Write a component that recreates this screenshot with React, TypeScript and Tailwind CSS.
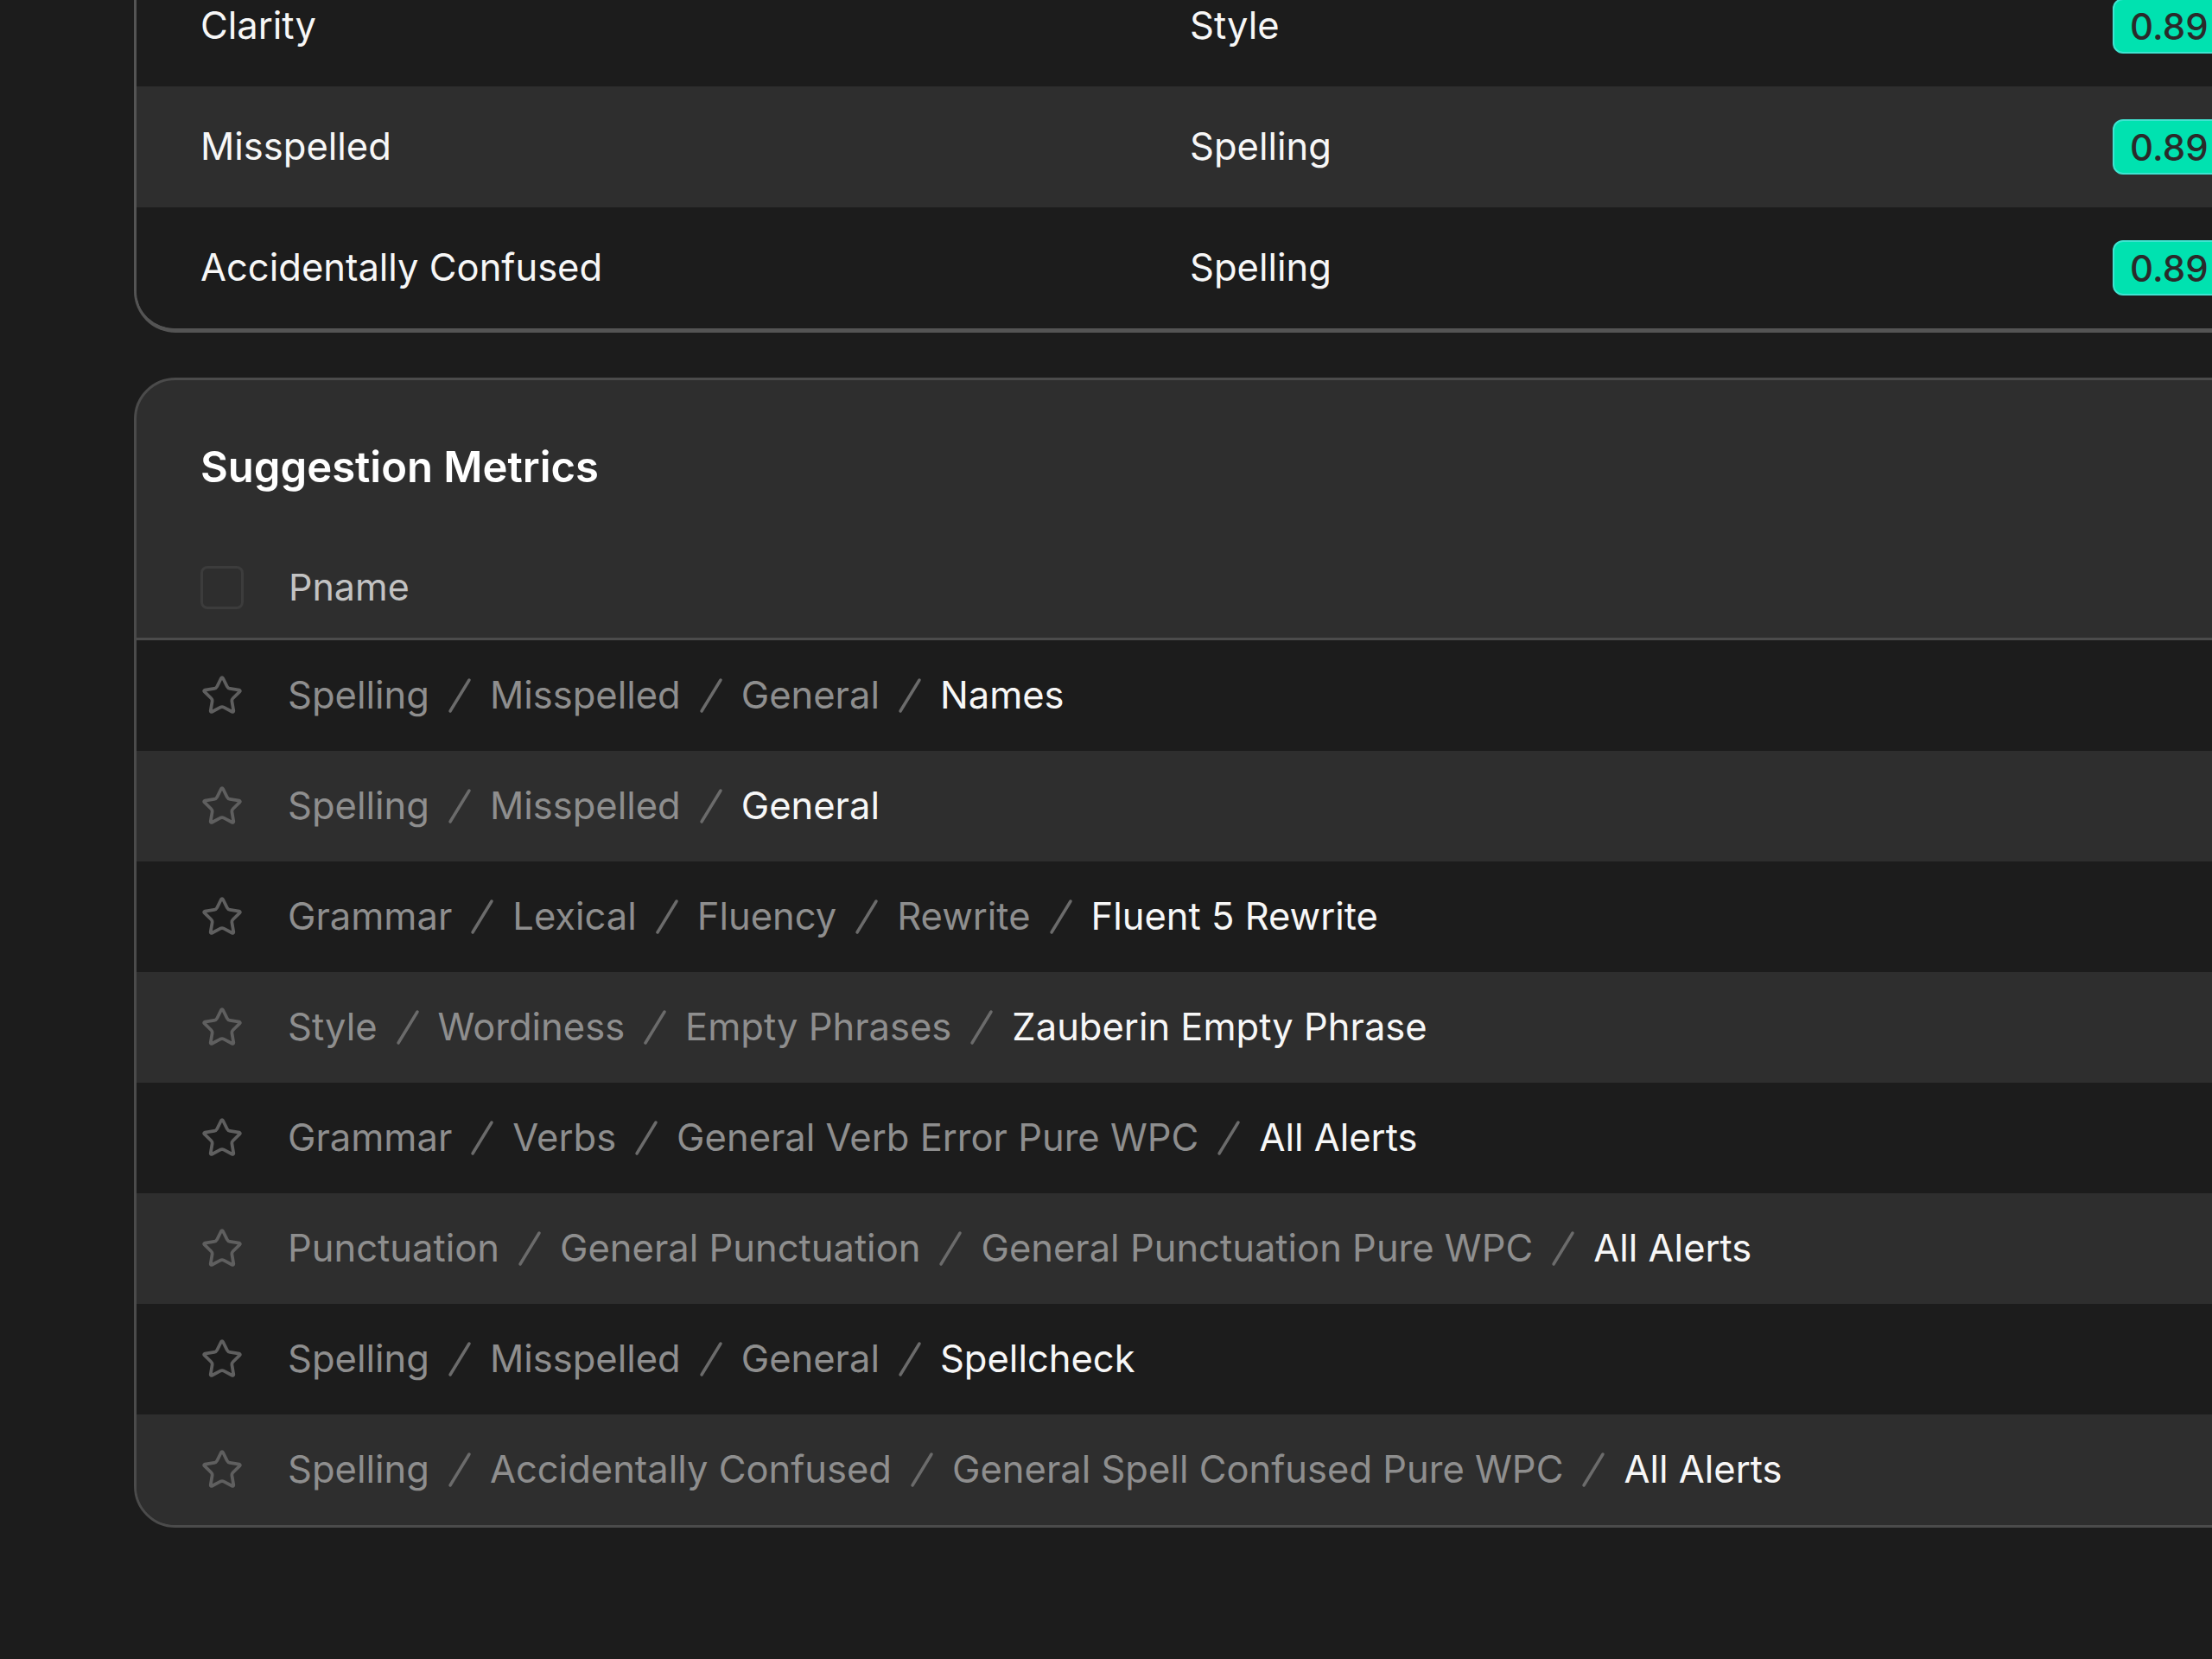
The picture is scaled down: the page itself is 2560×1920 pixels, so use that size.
import React from 'react';
import { Star } from 'lucide-react';

const topRows = [
  { name: 'Clarity', type: 'Style', score: '0.89', bg: 'bg-[#1c1c1c]' },
  { name: 'Misspelled', type: 'Spelling', score: '0.89', bg: 'bg-[#2e2e2e]' },
  { name: 'Accidentally Confused', type: 'Spelling', score: '0.89', bg: 'bg-[#1c1c1c]' },
];

const metrics: string[][] = [
  ['Spelling', 'Misspelled', 'General', 'Names'],
  ['Spelling', 'Misspelled', 'General'],
  ['Grammar', 'Lexical', 'Fluency', 'Rewrite', 'Fluent 5 Rewrite'],
  ['Style', 'Wordiness', 'Empty Phrases', 'Zauberin Empty Phrase'],
  ['Grammar', 'Verbs', 'General Verb Error Pure WPC', 'All Alerts'],
  ['Punctuation', 'General Punctuation', 'General Punctuation Pure WPC', 'All Alerts'],
  ['Spelling', 'Misspelled', 'General', 'Spellcheck'],
  ['Spelling', 'Accidentally Confused', 'General Spell Confused Pure WPC', 'All Alerts'],
];

function Slash() {
  return (
    <svg width="28" height="42" viewBox="0 0 28 42" className="mx-[21px] shrink-0">
      <line x1="3" y1="39" x2="25" y2="3" stroke="#6b6b6b" strokeWidth="3.5" strokeLinecap="round" />
    </svg>
  );
}

function Crumbs({ parts }: { parts: string[] }) {
  return (
    <div className="flex items-center text-[43.5px] leading-none">
      {parts.map((p, i) => {
        const last = i === parts.length - 1;
        return (
          <React.Fragment key={i}>
            {i > 0 ? <Slash /> : null}
            <span className={last ? 'text-[#f7f7f7]' : 'text-[#8e8e8e]'}>{p}</span>
          </React.Fragment>
        );
      })}
    </div>
  );
}

export default function App() {
  return (
    <div className="w-[2560px] h-[1920px] overflow-hidden bg-[#1c1c1c] pl-[155px] font-['Inter','Noto_Sans',sans-serif] antialiased">
      {/* scores table, scrolled past its top */}
      <div className="-mt-[40px] w-[2600px] overflow-hidden rounded-bl-[48px] border-l-[3px] border-b-[5px] border-[#545454]">
        {topRows.map((r) => (
          <div key={r.name} className={`flex items-center h-[140px] pl-[74px] text-[43.5px] text-[#f7f7f7] ${r.bg}`}>
            <div className="w-[1145px]">{r.name}</div>
            <div className="w-[1068px]">{r.type}</div>
            <div className="flex items-center h-[64px] px-[18px] rounded-[12px] border-2 border-[#3fe3d0] bg-[#00e2b0] text-[#2a2a2a] font-medium text-[42px]">
              {r.score}
            </div>
          </div>
        ))}
      </div>

      <div className="mt-[52px] w-[2600px] overflow-hidden rounded-[48px] border-[3px] border-[#4b4b4b] bg-[#2e2e2e]">
        <div className="pt-[72px] pl-[74px] text-[49px] leading-[58px] font-semibold text-white">Suggestion Metrics</div>

        <div className="mt-[51px] flex items-center h-[120px] pl-[74px] border-b-[3px] border-[#4b4b4b]">
          <div className="w-[50px] h-[50px] rounded-[8px] border-[3px] border-[#3c3c3c]" />
          <span className="ml-[52px] text-[43px] text-[#c2c2c2]">Pname</span>
        </div>

        {metrics.map((parts, i) => (
          <div
            key={i}
            className={`flex items-center h-[128px] pl-[74px] ${i % 2 === 0 ? 'bg-[#1c1c1c]' : 'bg-[#2e2e2e]'}`}
          >
            <Star size={50} strokeWidth={1.8} color="#5f5f5f" className="shrink-0" />
            <div className="ml-[51px]">
              <Crumbs parts={parts} />
            </div>
          </div>
        ))}
      </div>
    </div>
  );
}
